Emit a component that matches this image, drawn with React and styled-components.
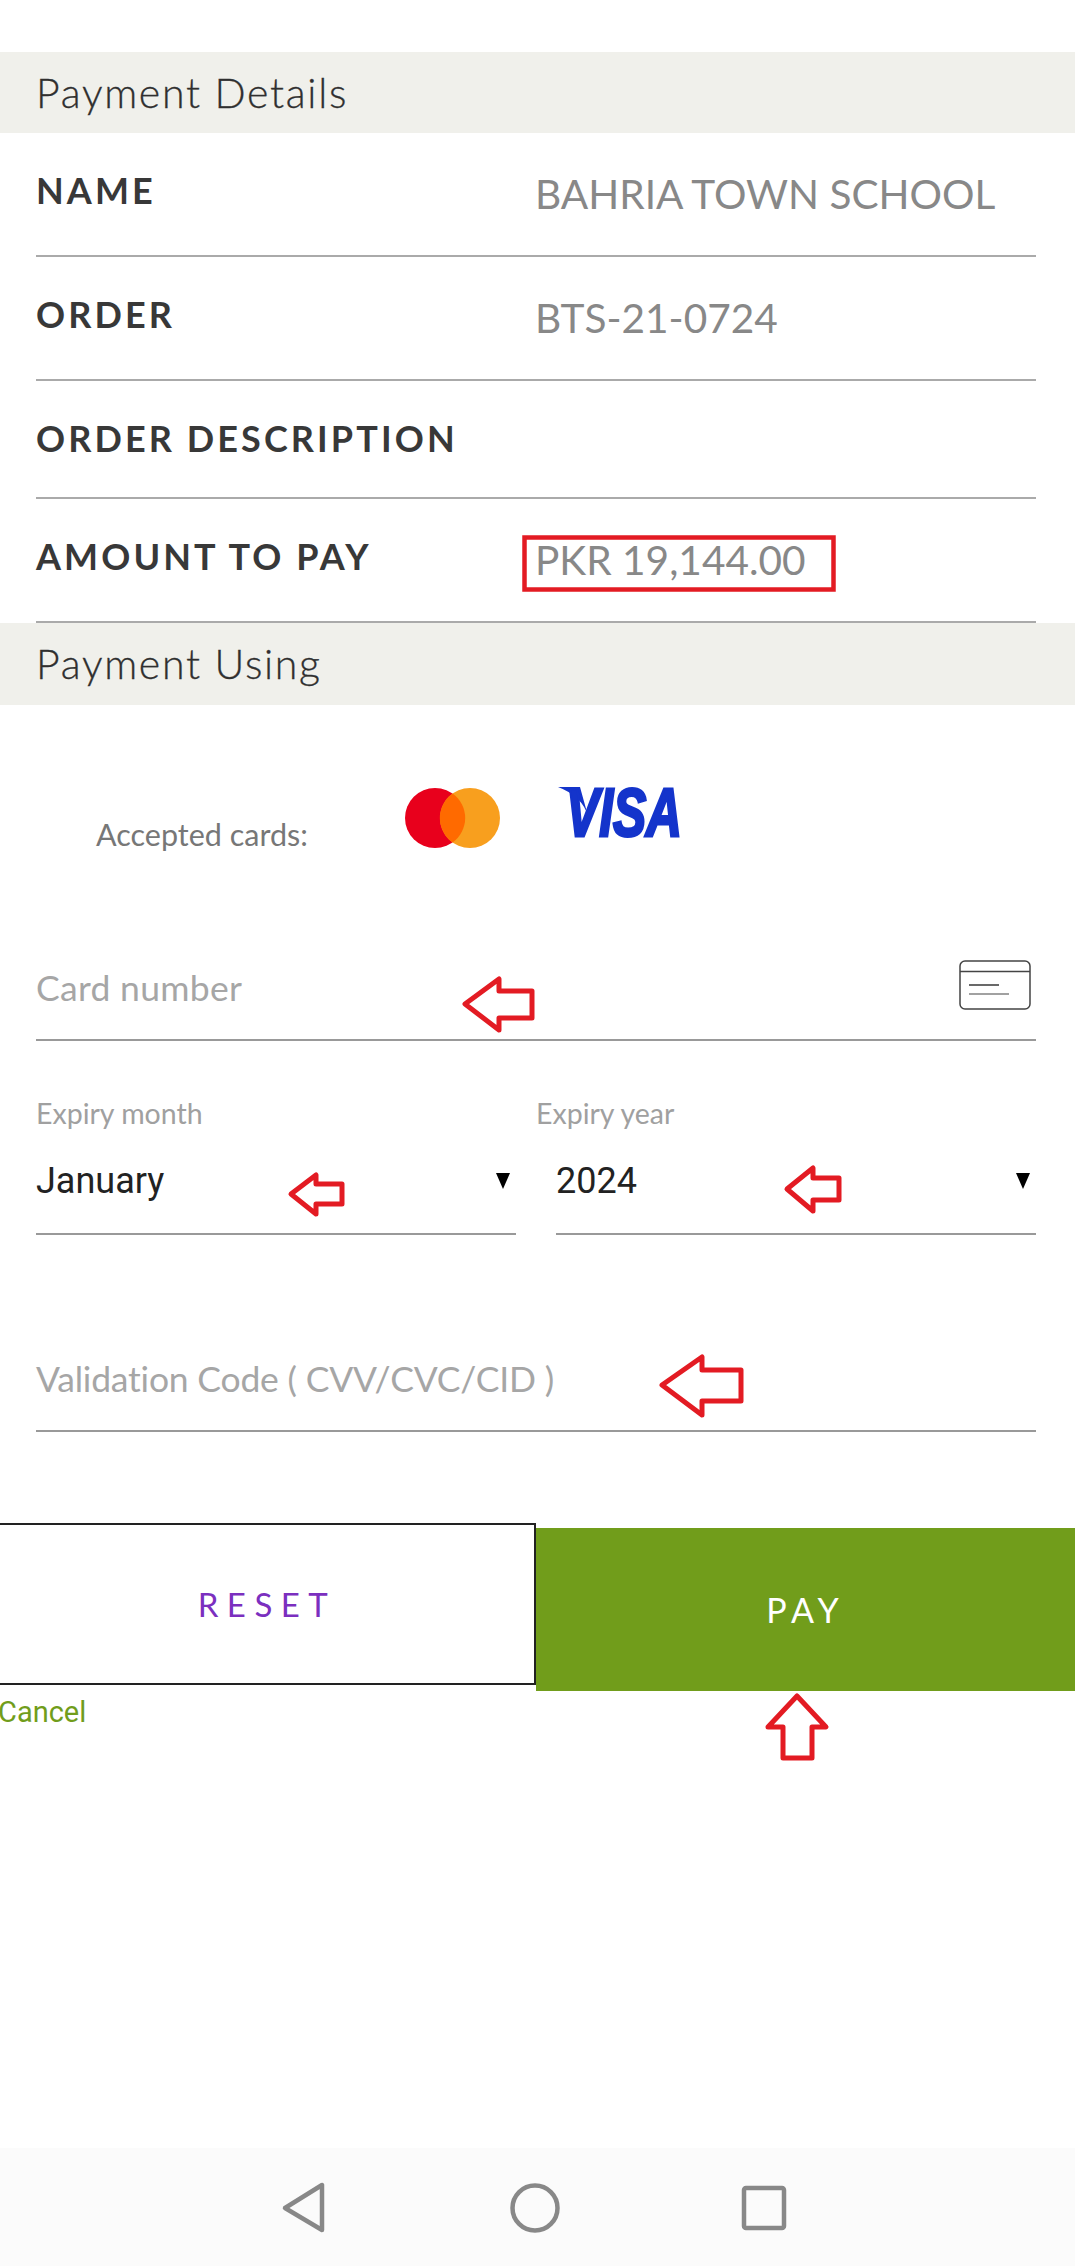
import React from "react";
import styled, { createGlobalStyle } from "styled-components";

const Global = createGlobalStyle`
  html, body { margin: 0; padding: 0; background: #fff; }
  * { box-sizing: border-box; }
`;

const Page = styled.div`
  position: relative;
  width: 1075px;
  height: 2266px;
  padding-top: 52px;
  display: flex;
  flex-direction: column;
  overflow: hidden;
  font-family: "Lato", "Liberation Sans", sans-serif;
  background: #fff;
`;

const Band = styled.h2`
  margin: 0;
  height: ${(p) => p.$height}px;
  padding: 0 36px;
  background: #f0f0eb;
  color: #2f2f2f;
  font-family: "Lato", sans-serif;
  font-weight: 300;
  font-size: 41px;
  line-height: 81px;
  letter-spacing: 1.7px;
  -webkit-text-stroke: 0.3px #2f2f2f;
`;

const Row = styled.div`
  margin: 0 39px 0 36px;
  padding: 36px 0;
  display: grid;
  grid-template-columns: 499px 1fr;
  align-items: start;
  border-bottom: 2px solid #aaa;
`;

const RowLabel = styled.div`
  margin-top: -1px;
  height: 45px;
  color: #383838;
  font-weight: 700;
  font-size: 36px;
  line-height: 44px;
  letter-spacing: 3.1px;
  white-space: nowrap;
`;

const RowValue = styled.div`
  color: #888;
  font-size: 40.6px;
  line-height: 50px;
  white-space: nowrap;
`;

const CardsRow = styled.div`
  height: 247px;
  padding: 81px 0 0 96px;
  display: flex;
  align-items: flex-start;
`;

const AcceptedText = styled.div`
  width: 309px;
  margin-top: 28px;
  color: #777;
  font-size: 30.5px;
  line-height: 40px;
  white-space: nowrap;
`;

const MasterMark = styled.svg`
  margin-top: 2px;
`;

const VisaMark = styled.svg`
  margin-left: 58px;
  overflow: visible;
`;

const Form = styled.div`
  padding: 0 39px 0 36px;
  display: flex;
  flex-direction: column;
`;

const InputField = styled.div`
  height: ${(p) => p.$height}px;
  margin-top: ${(p) => p.$top}px;
  padding-right: 5px;
  display: flex;
  justify-content: space-between;
  align-items: flex-start;
  border-bottom: 2px solid #999;
`;

const Placeholder = styled.div`
  color: #a6a6a6;
  font-size: 35.5px;
  line-height: 72px;
  letter-spacing: ${(p) => p.$tracking}px;
`;

const CardIcon = styled.svg`
  margin-top: 8px;
`;

const ExpiryGrid = styled.div`
  margin-top: 54px;
  display: grid;
  grid-template-columns: 480px 480px;
  column-gap: 40px;
`;

const ExpiryLabel = styled.div`
  margin-left: ${(p) => p.$shift}px;
  margin-top: -1px;
  margin-bottom: 1px;
  color: #a0a0a0;
  font-size: 28.5px;
  line-height: 38px;
`;

const SelectBox = styled.div`
  margin-top: 22px;
  height: 81px;
  padding-right: 6px;
  display: flex;
  justify-content: space-between;
  align-items: flex-start;
  border-bottom: 2px solid #999;
  color: #222;
  font-family: "Roboto", sans-serif;
  font-size: 36px;
  line-height: 54px;
`;

const Caret = styled.span`
  margin-top: 19px;
  border-left: 7.5px solid transparent;
  border-right: 7.5px solid transparent;
  border-top: 16px solid #000;
`;

const ButtonRow = styled.div`
  margin-top: 91px;
  display: flex;
  align-items: flex-start;
`;

const LeftColumn = styled.div`
  width: 536px;
`;

const ResetButton = styled.button`
  display: block;
  width: 100%;
  height: 162px;
  padding: 0;
  background: #fff;
  border: 2.5px solid #222;
  border-left: none;
  color: #7b2fbf;
  font-family: "Lato", sans-serif;
  font-size: 33px;
  letter-spacing: 8.5px;
`;

const PayButton = styled.button`
  width: 539px;
  height: 163px;
  margin-top: 5px;
  padding: 0;
  background: #719d1b;
  border: none;
  color: #fff;
  font-family: "Lato", sans-serif;
  font-weight: 400;
  font-size: 34px;
  letter-spacing: 6px;
`;

const CancelLink = styled.a`
  display: block;
  margin: 7px 0 0 -2px;
  color: #719d1b;
  font-family: "Roboto", sans-serif;
  font-size: 29px;
  line-height: 40px;
`;

const NavBar = styled.div`
  margin-top: auto;
  height: 118px;
  background: #fbfbfb;
`;

const NavIcons = styled.svg`
  display: block;
`;

const Annotations = styled.svg`
  position: absolute;
  left: 0;
  top: 0;
  pointer-events: none;
`;

const arrows = [
  "465,1004 499,979 499,991 532,991 532,1018 499,1018 499,1030",
  "291,1194 316,1175 316,1184 342,1184 342,1204 316,1204 316,1214",
  "787,1189 813,1168 813,1178 839,1178 839,1200 813,1200 813,1211",
  "662,1385 702,1357 702,1370 741,1370 741,1401 702,1401 702,1415",
  "797,1696 826,1727 812,1727 812,1758 783,1758 783,1727 768,1727",
];

const details = [
  { label: "NAME", value: "BAHRIA TOWN SCHOOL" },
  { label: "ORDER", value: "BTS-21-0724" },
  { label: "ORDER DESCRIPTION" },
  { label: "AMOUNT TO PAY", value: "PKR 19,144.00" },
];

export default function App() {
  return (
    <Page>
      <Global />
      <Band $height={81}>Payment Details</Band>
      {details.map((d) => (
        <Row key={d.label}>
          <RowLabel>{d.label}</RowLabel>
          {d.value && <RowValue>{d.value}</RowValue>}
        </Row>
      ))}
      <Band $height={82}>Payment Using</Band>
      <CardsRow>
        <AcceptedText>Accepted cards:</AcceptedText>
        <MasterMark width="95" height="60" viewBox="0 0 95 60">
          <circle cx="30" cy="30" r="30" fill="#e8001c" />
          <circle cx="65" cy="30" r="30" fill="#f89f1e" />
          <path d="M47.5 5.5 A30 30 0 0 1 47.5 54.5 A30 30 0 0 1 47.5 5.5 Z" fill="#ff6a00" />
        </MasterMark>
        <VisaMark width="124" height="52" viewBox="0 0 124 52">
          <path d="M0 1 H22 L30 30 Q24 10 0 1 Z" fill="#1434cb" />
          <text
            x="8"
            y="50"
            textLength="116"
            lengthAdjust="spacingAndGlyphs"
            fontFamily="Liberation Sans, sans-serif"
            fontWeight="700"
            fontStyle="italic"
            fontSize="68"
            fill="#1434cb"
            stroke="#1434cb"
            strokeWidth="3"
          >
            VISA
          </text>
        </VisaMark>
      </CardsRow>
      <Form>
        <InputField $height={89} $top={0}>
          <Placeholder $tracking={0.3}>Card number</Placeholder>
          <CardIcon width="72" height="50" viewBox="0 0 72 50" fill="none" stroke="#444">
            <rect x="1" y="1" width="70" height="48" rx="5" strokeWidth="1.5" />
            <line x1="1" y1="11.5" x2="71" y2="11.5" strokeWidth="1.5" />
            <line x1="10" y1="25" x2="40" y2="25" strokeWidth="1.6" />
            <line x1="10" y1="34" x2="50" y2="34" strokeWidth="1.2" />
          </CardIcon>
        </InputField>
        <ExpiryGrid>
          <div>
            <ExpiryLabel $shift={0}>Expiry month</ExpiryLabel>
            <SelectBox>
              January
              <Caret />
            </SelectBox>
          </div>
          <div>
            <ExpiryLabel $shift={-20}>Expiry year</ExpiryLabel>
            <SelectBox>
              2024
              <Caret />
            </SelectBox>
          </div>
        </ExpiryGrid>
        <InputField $height={89} $top={108}>
          <Placeholder $tracking={-0.2}>Validation Code ( CVV/CVC/CID )</Placeholder>
        </InputField>
      </Form>
      <ButtonRow>
        <LeftColumn>
          <ResetButton>RESET</ResetButton>
          <CancelLink>Cancel</CancelLink>
        </LeftColumn>
        <PayButton>PAY</PayButton>
      </ButtonRow>
      <NavBar>
        <NavIcons width="1075" height="118" viewBox="0 2148 1075 118" fill="none" stroke="#888" strokeWidth="4.5" strokeLinejoin="round">
          <path d="M322 2185 V2230 L285 2208 Z" />
          <circle cx="535" cy="2208" r="22.5" />
          <rect x="744" y="2188" width="40" height="40" rx="2" />
        </NavIcons>
      </NavBar>
      <Annotations width="1075" height="2266" viewBox="0 0 1075 2266" fill="none" stroke="#e31b23">
        <rect x="524.5" y="537.5" width="309" height="52" strokeWidth="4.5" />
        {arrows.map((points) => (
          <polygon key={points} points={points} strokeWidth="5" strokeLinejoin="round" />
        ))}
      </Annotations>
    </Page>
  );
}
